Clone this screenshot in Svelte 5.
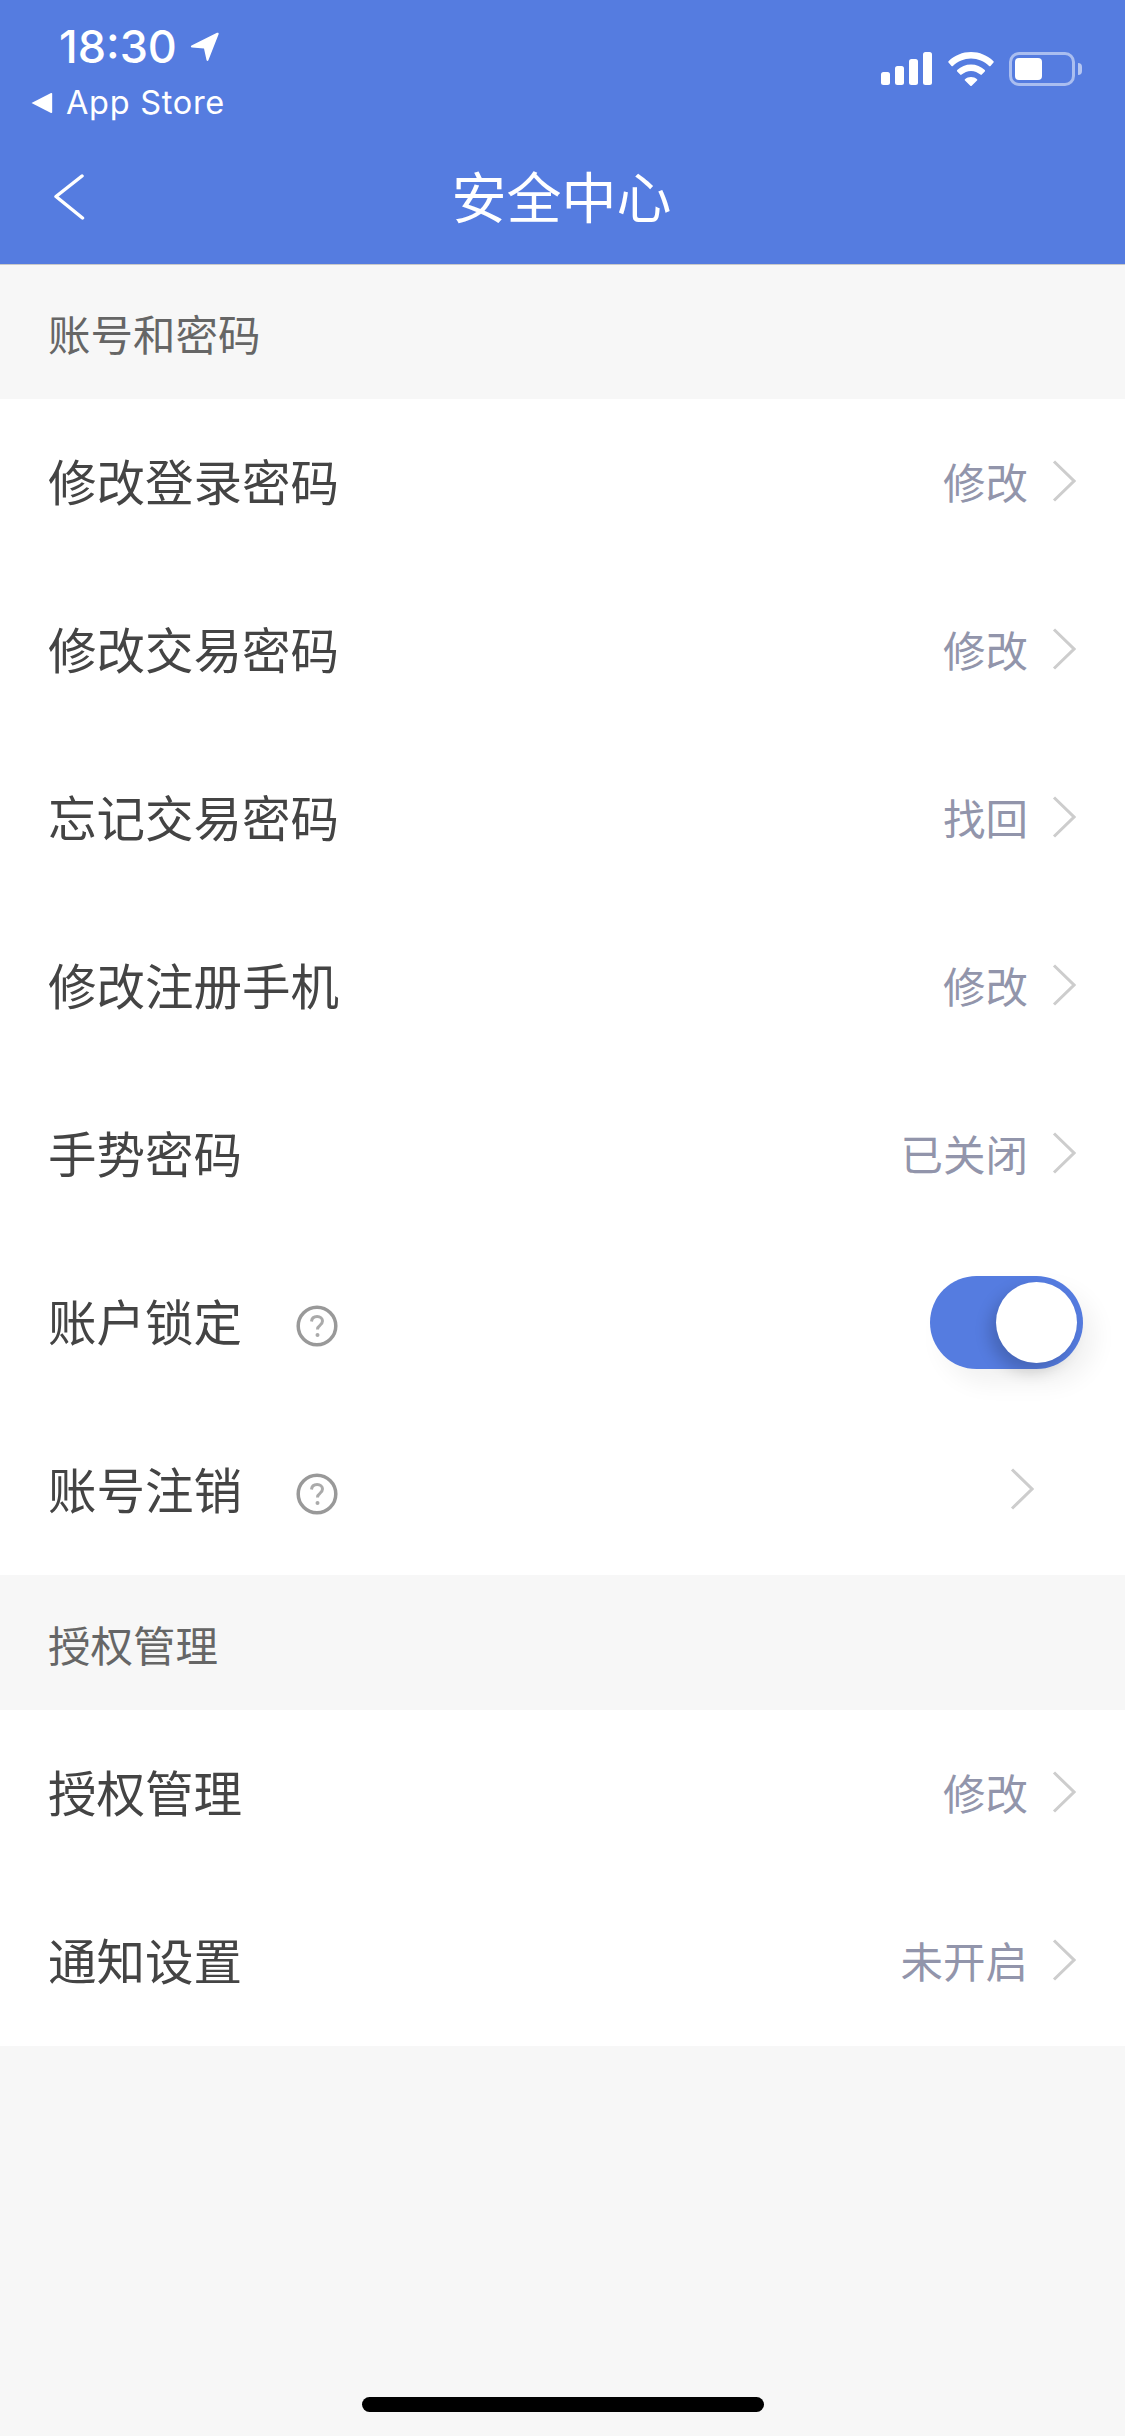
<script>
	const firstGroup = [
		{ label: "修改登录密码", value: "修改" },
		{ label: "修改交易密码", value: "修改" },
		{ label: "忘记交易密码", value: "找回" },
		{ label: "修改注册手机", value: "修改" },
		{ label: "手势密码", value: "已关闭" },
		{ label: "账户锁定", help: true, toggle: true },
		{ label: "账号注销", help: true, inset: true }
	];
	const secondGroup = [
		{ label: "授权管理", value: "修改" },
		{ label: "通知设置", value: "未开启" }
	];
	const sections = [
		{ title: "账号和密码", rows: firstGroup },
		{ title: "授权管理", rows: secondGroup }
	];
</script>

<main>
	<header>
		<div class="status">
			<div class="status-left">
				<div class="time">
					18:30
					<svg class="loc" width="30" height="31" viewBox="0 0 30 31">
						<path d="M1.500 14.500 27 1.800c1.200-.5 2 .3 1.600 1.500L18.500 29c-.4 1.200-1.700 1.200-2-.1L14 17.500 2 16.400c-1.300-.1-1.500-1.300-.5-1.900Z" fill="#fff" />
					</svg>
				</div>
				<div class="back-app">
					<svg width="22" height="22" viewBox="0 0 22 22">
						<path d="M0.500 11 20 1c.6-.3 1.200 0 1.200.7v18.600c0 .7-.6 1-1.200.7Z" fill="#fff" />
					</svg>
					App Store
				</div>
			</div>
			<div class="status-right">
				<svg width="52" height="33" viewBox="0 0 52 33">
					<rect x="0" y="20" width="9" height="13" rx="2.500" fill="#fff" />
					<rect x="14" y="14" width="9" height="19" rx="2.500" fill="#fff" />
					<rect x="28" y="7" width="9" height="26" rx="2.500" fill="#fff" />
					<rect x="42" y="0" width="9" height="33" rx="2.500" fill="#fff" />
				</svg>
				<svg width="46" height="34" viewBox="0 0 46 34">
					<path d="M23 0c8.500 0 16.300 3.300 22.500 9.200.4.400.4 1 0 1.400l-3 3.300c-.4.400-1 .4-1.400 0C36.200 9.300 29.900 6.500 23 6.500S9.800 9.300 4.900 13.900c-.4.400-1 .4-1.400 0l-3-3.300c-.4-.4-.4-1 0-1.400C6.700 3.300 14.500 0 23 0Z" fill="#fff" />
					<path d="M23 12.500c5.300 0 10 2 13.800 5.500.4.400.4 1 0 1.400l-3 3.200c-.4.400-1 .4-1.400 0-2.600-2.300-5.800-3.700-9.400-3.700s-6.800 1.400-9.400 3.700c-.4.400-1 .4-1.400 0l-3-3.200c-.4-.4-.4-1 0-1.400C13 14.500 17.700 12.500 23 12.500Z" fill="#fff" />
					<path d="M23 25c2.300 0 4.400.9 6 2.300.4.400.4.900 0 1.300l-5.300 5.100c-.4.400-1 .4-1.400 0L17 28.600c-.4-.4-.4-.900 0-1.300 1.600-1.400 3.700-2.300 6-2.300Z" fill="#fff" />
				</svg>
				<div class="battery">
					<div class="battery-body"><div class="battery-fill"></div></div>
					<div class="battery-nub"></div>
				</div>
			</div>
		</div>
		<nav>
			<svg class="back" width="32" height="46" viewBox="0 0 32 46">
				<path d="M29 2 3 22.500 29.500 44" fill="none" stroke="#fff" stroke-width="3.500" stroke-linecap="round" stroke-linejoin="round" />
			</svg>
			<h1>安全中心</h1>
			<span></span>
		</nav>
	</header>

	{#each sections as section}
		<div class="section-title"><span>{section.title}</span></div>
		<div class="group">
			{#each section.rows as row}
				<div class="row">
					<span class="label">{row.label}</span>
					{#if row.help}
						<svg class="help" width="42" height="42" viewBox="0 0 42 42">
							<circle cx="21" cy="21" r="18.800" fill="none" stroke="#999" stroke-width="3.500" />
							<path d="M15.500 16.500c.3-3.200 2.500-5 5.600-5 3.200 0 5.400 1.900 5.400 4.600 0 2-1 3.100-2.600 4.300-1.700 1.200-2.400 2-2.400 4" fill="none" stroke="#aaa" stroke-width="3" />
							<circle cx="21.500" cy="30" r="2" fill="#aaa" />
						</svg>
					{/if}
					<span class="spacer"></span>
					{#if row.value}
						<span class="value">{row.value}</span>
					{/if}
					{#if row.toggle}
						<div class="toggle"><div class="knob"></div></div>
					{:else}
						<svg class="chevron" class:inset={row.inset} width="24" height="42" viewBox="0 0 24 42">
							<path d="M2 1.500 22 21 2 40.500" fill="none" stroke="#cdcdcd" stroke-width="3" />
						</svg>
					{/if}
				</div>
			{/each}
		</div>
	{/each}

	<div class="home"></div>
</main>

<style>
	:global(body) {
		margin: 0;
		background: #f7f7f7;
	}
	main {
		position: relative;
		width: 1125px;
		height: 2436px;
		background: #f7f7f7;
		font-family: "Noto Sans CJK SC", "Noto Sans", sans-serif;
		overflow: hidden;
	}
	header {
		height: 264px;
		background: #557ce0;
		border-bottom: 1px solid #c9c9c9;
		color: #fff;
		display: flex;
		flex-direction: column;
	}
	.status {
		height: 130px;
		display: flex;
		justify-content: space-between;
		font-family: Inter, "Liberation Sans", sans-serif;
	}
	.status-left {
		padding: 20px 0 0 31px;
	}
	.time {
		display: flex;
		align-items: center;
		gap: 13px;
		margin-left: 28px;
		font-size: 45px;
		font-weight: 500;
		line-height: 54px;
	}
	.loc {
		margin-top: -1px;
	}
	.back-app {
		display: flex;
		align-items: center;
		gap: 13px;
		font-size: 32.500px;
		font-weight: 400;
		line-height: 40px;
		margin-top: 9px;
		letter-spacing: 0.700px;
	}
	.status-right {
		display: flex;
		align-items: flex-start;
		gap: 15px;
		padding: 52px 43px 0 0;
	}
	.battery {
		display: flex;
		align-items: center;
		gap: 3px;
	}
	.battery-body {
		box-sizing: border-box;
		width: 66px;
		height: 34px;
		border: 3px solid #ffffff80;
		border-radius: 10px;
		padding: 3px;
	}
	.battery-fill {
		width: 27px;
		height: 22px;
		background: #fff;
		border-radius: 4px;
	}
	.battery-nub {
		width: 4px;
		height: 12px;
		background: #ffffff90;
		border-radius: 0 6px 6px 0;
	}
	nav {
		flex: 1;
		display: grid;
		grid-template-columns: 1fr auto 1fr;
		align-items: center;
		padding: 0 0 0 53px;
	}
	h1 {
		margin: 0 0 5px -55px;
		font-size: 55px;
		font-weight: 400;
		line-height: 1;
		color: #fff;
	}
	.section-title {
		height: 134px;
		display: flex;
		align-items: center;
		padding-left: 48px;
		font-size: 42.500px;
		color: #666;
	}
	.group + .section-title {
		height: 135px;
	}
	.section-title span {
		margin-top: 1px;
	}
	.group {
		background: #fff;
	}
	.row {
		height: 168px;
		display: flex;
		align-items: center;
		padding: 0 49px 0 48px;
	}
	.label {
		font-size: 48.500px;
		color: #444;
		margin-top: -6px;
	}
	.spacer {
		flex: 1;
	}
	.value {
		font-size: 42.500px;
		color: #9295ab;
		margin: -5px 24px 0 0;
	}
	.help {
		margin: 6px 0 0 54px;
	}
	.chevron {
		margin-top: -5px;
	}
	.chevron.inset {
		margin-right: 42px;
	}
	.toggle {
		box-sizing: border-box;
		width: 153px;
		height: 93px;
		margin: -2px -7px 0 0;
		padding: 6px;
		display: flex;
		justify-content: flex-end;
		background: #557ce0;
		border-radius: 47px;
		box-shadow: 12px 14px 24px #0000000f;
	}
	.knob {
		width: 81px;
		height: 81px;
		border-radius: 50%;
		background: #fff;
		box-shadow: -6px 8px 16px #00000030;
	}
	.home {
		position: absolute;
		left: 362px;
		top: 2397px;
		width: 402px;
		height: 15px;
		background: #000;
		border-radius: 8px;
	}
</style>
